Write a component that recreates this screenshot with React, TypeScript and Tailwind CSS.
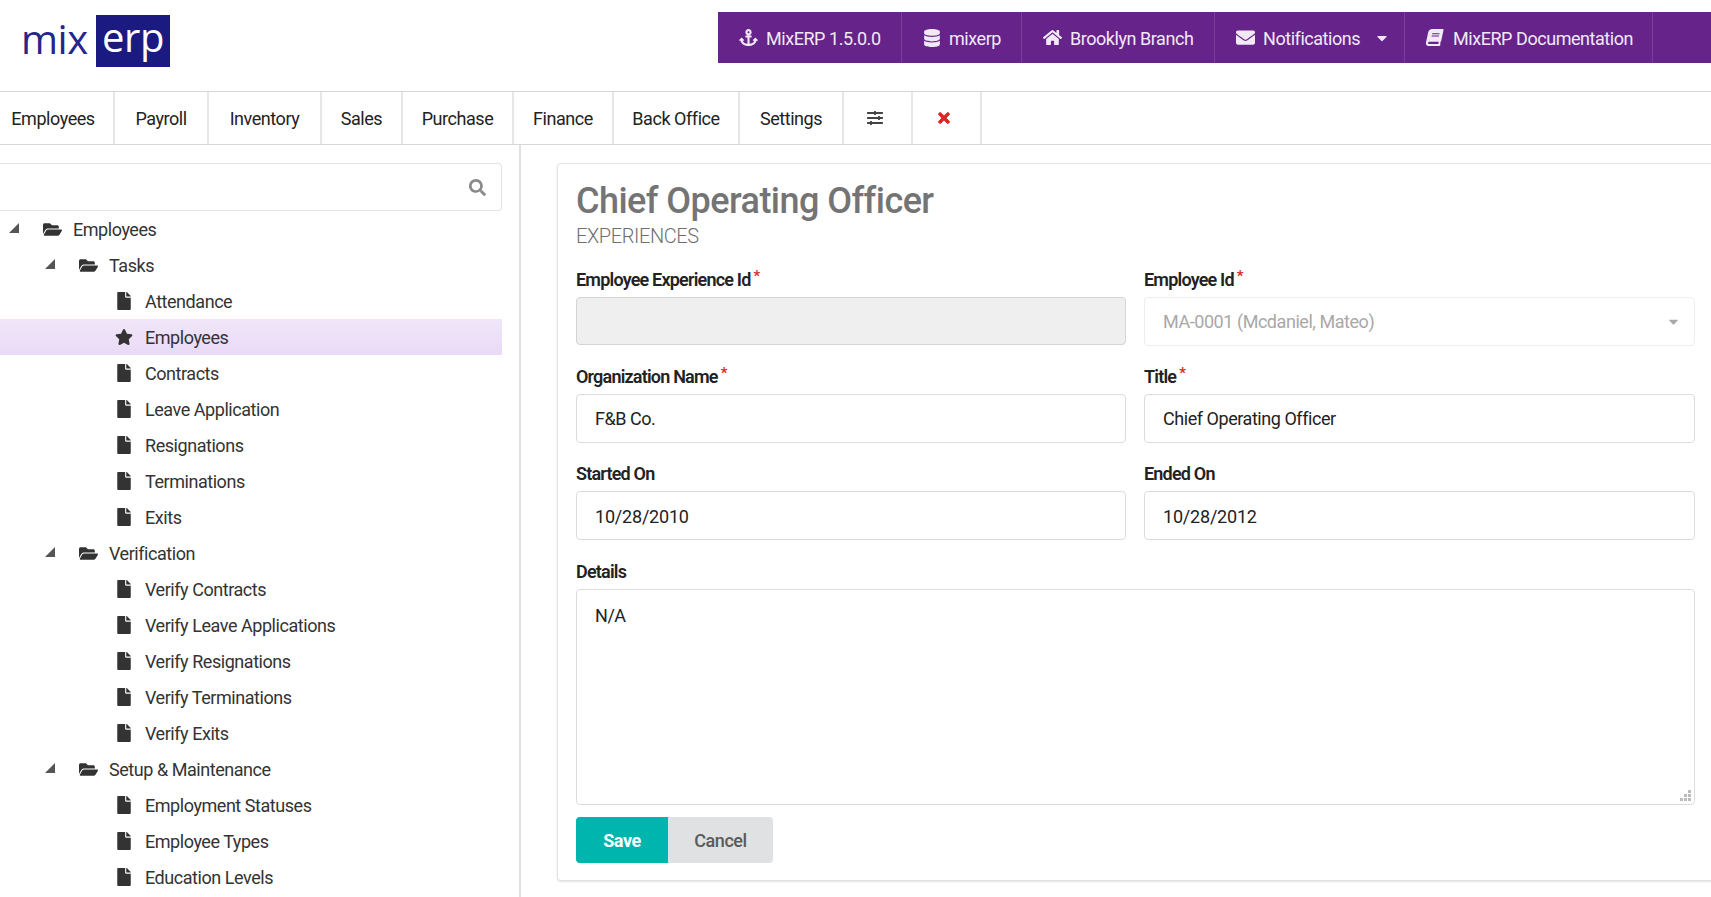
import React from 'react';
import { FaAnchor, FaBook, FaCaretDown, FaDatabase, FaEnvelope, FaFile, FaFolderOpen, FaHome, FaSearch, FaSlidersH, FaStar, FaTimes } from 'react-icons/fa';

const topLinks = [
  { label: 'MixERP 1.5.0.0', icon: <FaAnchor className="text-[19px]" />, width: 'w-[184px]', gap: 'gap-[8px]' },
  { label: 'mixerp', icon: <FaDatabase className="text-[18px]" />, width: 'w-[120px]', gap: 'gap-[8px]' },
  { label: 'Brooklyn Branch', icon: <FaHome className="text-[19px]" />, width: 'w-[193px]', gap: 'gap-[8px]' },
  { label: 'Notifications', icon: <FaEnvelope className="text-[19px]" />, width: 'w-[190px]', gap: 'gap-[8px]', caret: true },
  { label: 'MixERP Documentation', icon: <FaBook className="-skew-x-12 text-[17px]" />, width: 'w-[248px]', gap: 'gap-[10px]' },
];

const menus = [
  { label: 'Employees', width: 'w-[115px]', extra: 'pr-[7px]' },
  { label: 'Payroll', width: 'w-[94px]', extra: '' },
  { label: 'Inventory', width: 'w-[113px]', extra: '' },
  { label: 'Sales', width: 'w-[81px]', extra: '' },
  { label: 'Purchase', width: 'w-[111px]', extra: '' },
  { label: 'Finance', width: 'w-[100px]', extra: '' },
  { label: 'Back Office', width: 'w-[126px]', extra: '' },
  { label: 'Settings', width: 'w-[104px]', extra: '' },
];

const tree: { label: string; depth: 0 | 1 | 2; active?: boolean }[] = [
  { label: 'Employees', depth: 0 },
  { label: 'Tasks', depth: 1 },
  { label: 'Attendance', depth: 2 },
  { label: 'Employees', depth: 2, active: true },
  { label: 'Contracts', depth: 2 },
  { label: 'Leave Application', depth: 2 },
  { label: 'Resignations', depth: 2 },
  { label: 'Terminations', depth: 2 },
  { label: 'Exits', depth: 2 },
  { label: 'Verification', depth: 1 },
  { label: 'Verify Contracts', depth: 2 },
  { label: 'Verify Leave Applications', depth: 2 },
  { label: 'Verify Resignations', depth: 2 },
  { label: 'Verify Terminations', depth: 2 },
  { label: 'Verify Exits', depth: 2 },
  { label: 'Setup & Maintenance', depth: 1 },
  { label: 'Employment Statuses', depth: 2 },
  { label: 'Employee Types', depth: 2 },
  { label: 'Education Levels', depth: 2 },
];

function Arrow() {
  return (
    <svg width="10" height="10" viewBox="0 0 10 10" className="shrink-0 fill-[#555]">
      <path d="M10 0V10H0Z" />
    </svg>
  );
}

function TreeRow({ label, depth, active }: { label: string; depth: 0 | 1 | 2; active?: boolean }) {
  return (
    <div className={`flex h-9 items-center text-[#333] ${active ? 'bg-gradient-to-b from-[#f1e6f9] to-[#e9daf5]' : ''}`}>
      {depth === 0 && <div className="ml-[9px] mr-[24px] -mt-0.5"><Arrow /></div>}
      {depth === 1 && <div className="ml-[45px] mr-[24px] -mt-0.5"><Arrow /></div>}
      {depth === 2 && <div className="w-[115px] shrink-0" />}
      {depth === 2 ? (
        active ? <FaStar className="mr-[12px] w-[18px] text-[18px] text-[#333]" /> : <FaFile className="mr-[12px] w-[18px] text-[18px] text-[#333]" />
      ) : (
        <FaFolderOpen className="mr-[11px] w-[19px] text-[19px] text-[#333]" />
      )}
      <span>{label}</span>
    </div>
  );
}

function Field({ label, required, children }: { label: string; required?: boolean; children: React.ReactNode }) {
  return (
    <div className="min-w-0">
      <div className="mb-[6px] flex h-[23px] items-start font-semibold leading-[23px] tracking-[-0.8px] text-[#222]">
        {label}
        {required && <span className="ml-[3px] -mt-[3px] text-[15px] text-[#db2828]">*</span>}
      </div>
      {children}
    </div>
  );
}

function TextBox({ value, date }: { value: string; date?: boolean }) {
  return (
    <input
      readOnly
      value={value}
      className={`h-[49px] w-full rounded border border-[#dcdcdc] bg-white px-[18px] text-[#222] outline-none ${date ? 'pt-[2px] tracking-[-0.2px]' : ''}`}
    />
  );
}

export default function App() {
  return (
    <div className="h-[897px] overflow-hidden bg-white text-[18px] tracking-[-0.45px] [font-family:Roboto,'Liberation_Sans',sans-serif]">
      <header className="flex h-[91px] items-start justify-between">
        <div className="ml-[21px] mt-[15px] flex h-[52px] items-stretch">
          <div className="flex w-[75px] items-center pb-1 text-[40px] font-normal leading-none tracking-[-0.5px] text-[#26268a] [font-family:'Open_Sans',sans-serif]">mix</div>
          <div className="flex w-[74px] items-center justify-center bg-[#1a1a80] pb-2 text-[40px] font-normal leading-none tracking-[-0.5px] text-white [font-family:'Open_Sans',sans-serif]">erp</div>
        </div>
        <nav className="mt-3 flex h-[51px] w-[993px] bg-[#66238a] text-[#f1e9f6]">
          {topLinks.map((link) => (
            <div key={link.label} className={`flex ${link.width} ${link.gap} shrink-0 items-center border-r border-[#7a3e9a] pl-[21px]`}>
              {link.icon}
              <span className="pt-[2px]">{link.label}</span>
              {link.caret && <FaCaretDown className="ml-[6px] text-[16px]" />}
            </div>
          ))}
        </nav>
      </header>

      <div className="flex h-[54px] border-y border-[#d8d8d8] text-[#222]">
        {menus.map((menu) => (
          <div key={menu.label} className={`flex ${menu.width} shrink-0 items-center justify-center border-r-2 border-[#e6e6e6] ${menu.extra}`}>
            {menu.label}
          </div>
        ))}
        <div className="flex w-[69px] shrink-0 items-center justify-center border-r-2 border-[#e6e6e6] pr-[5px]">
          <FaSlidersH className="text-[16px] text-[#444]" />
        </div>
        <div className="flex w-[69px] shrink-0 items-center justify-center border-r-2 border-[#e6e6e6] pr-[6px]">
          <FaTimes className="stroke-current stroke-[30] text-[16px] text-[#db2828]" />
        </div>
      </div>

      <div className="flex">
        <aside className="h-[752px] w-[521px] shrink-0 border-r-2 border-[#e0e0e0] pr-[17px] pt-[18px]">
          <div className="flex h-[48px] items-center justify-end rounded-r border border-l-0 border-[#e3e3e3] pr-[15px]">
            <FaSearch className="text-[17px] text-[#8a8a8a]" />
          </div>
          <div>
            {tree.map((row, i) => (
              <TreeRow key={i} label={row.label} depth={row.depth} active={row.active} />
            ))}
          </div>
        </aside>

        <main className="min-w-0 flex-1 pl-[36px] pt-[18px]">
          <section className="h-[718px] w-[1200px] rounded-l border border-r-0 border-[#e3e3e3] pl-[18px] pt-[15px] shadow-[0_1px_2px_rgba(0,0,0,0.12)]">
            <div className="w-[1119px]">
              <h1 className="text-[36px] font-medium leading-[44px] tracking-[-0.55px] text-[#747474]">Chief Operating Officer</h1>
              <h2 className="mb-[19px] text-[20px] font-light leading-[26px] tracking-[-0.4px] text-[#6f6f6f]">EXPERIENCES</h2>

              <div className="grid grid-cols-[550px_1fr] gap-x-[18px] gap-y-[19px]">
                <Field label="Employee Experience Id" required>
                  <div className="h-[48px] rounded border border-[#d4d4d4] bg-[#efefef]" />
                </Field>
                <Field label="Employee Id" required>
                  <div className="flex h-[49px] items-center justify-between rounded border border-[#ededed] pl-[18px] pr-[13px] text-[#a8a8a8]">
                    <span>MA-0001 (Mcdaniel, Mateo)</span>
                    <FaCaretDown className="text-[15px] text-[#a8a8a8]" />
                  </div>
                </Field>
                <Field label="Organization Name" required>
                  <TextBox value="F&B Co." />
                </Field>
                <Field label="Title" required>
                  <TextBox value="Chief Operating Officer" />
                </Field>
                <Field label="Started On">
                  <TextBox value="10/28/2010" date />
                </Field>
                <Field label="Ended On">
                  <TextBox value="10/28/2012" date />
                </Field>
              </div>

              <div className="mt-[20px]">
                <Field label="Details">
                  <div className="relative h-[216px] rounded border border-[#dcdcdc] px-[18px] py-[13px] leading-[26px] text-[#222]">
                    N/A
                    <svg width="11" height="11" viewBox="0 0 11 11" className="absolute bottom-[3px] right-[3px] fill-[#bbb]">
                      <rect x="8" y="0" width="3" height="3" />
                      <rect x="4" y="4" width="3" height="3" />
                      <rect x="8" y="4" width="3" height="3" />
                      <rect x="0" y="8" width="3" height="3" />
                      <rect x="4" y="8" width="3" height="3" />
                      <rect x="8" y="8" width="3" height="3" />
                    </svg>
                  </div>
                </Field>
              </div>

              <div className="mt-[12px] flex h-[46px]">
                <button className="w-[92px] rounded-l bg-[#00b5ad] font-bold text-white">Save</button>
                <button className="w-[105px] rounded-r bg-[#e0e1e2] font-medium text-[#5a5a5a]">Cancel</button>
              </div>
            </div>
          </section>
        </main>
      </div>
    </div>
  );
}
